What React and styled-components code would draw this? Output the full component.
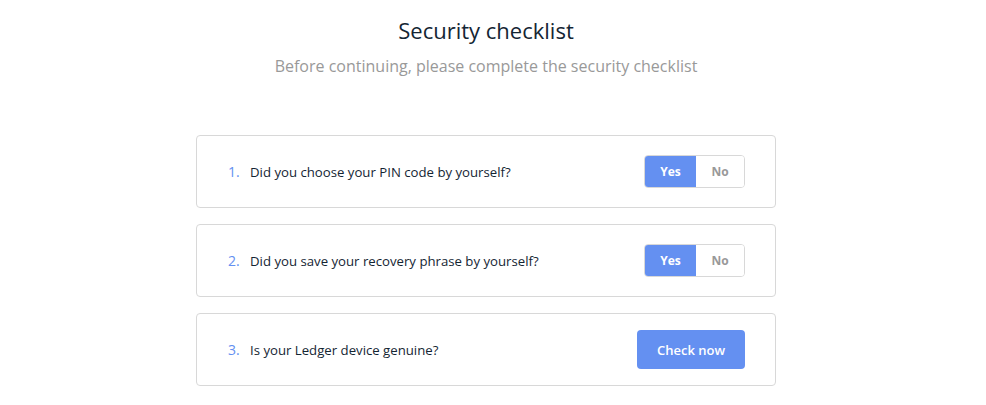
import React, { useState } from 'react'
import styled, { createGlobalStyle } from 'styled-components'

const Global = createGlobalStyle`
  body {
    margin: 0;
    background: #fff;
    font-family: "Open Sans", "DejaVu Sans", sans-serif;
  }
`

const Page = styled.div`
  width: 580px;
  margin-left: 196px;
  padding-top: 14px;
  display: flex;
  flex-direction: column;
  align-items: center;
`

const Title = styled.h1`
  margin: 0;
  font-size: 22px;
  font-weight: 400;
  color: #142533;
  line-height: 32px;
`

const Subtitle = styled.p`
  margin: 10px 0 0;
  font-size: 16px;
  color: #999;
  line-height: 20px;
`

const List = styled.div`
  margin-top: 59px;
  width: 100%;
  display: flex;
  flex-direction: column;
  gap: 16px;
`

const Card = styled.div`
  height: 73px;
  box-sizing: border-box;
  border: 1px solid #d8d8d8;
  border-radius: 4px;
  padding: 0 30px 0 31px;
  display: flex;
  align-items: center;
`

const Num = styled.span`
  color: #6490f1;
  font-size: 14px;
  width: 22px;
`

const Question = styled.span`
  flex: 1;
  font-size: 13.2px;
  color: #142533;
`

const Toggle = styled.div`
  display: flex;
  border: 1px solid #d8d8d8;
  border-radius: 4px;
  overflow: hidden;
  height: 33px;
  box-sizing: border-box;
`

const Opt = styled.button`
  border: none;
  font-family: inherit;
  font-size: 12px;
  font-weight: 700;
  width: ${p => p.$w}px;
  background: ${p => (p.$on ? '#6490f1' : '#fff')};
  color: ${p => (p.$on ? '#fff' : '#999')};
  cursor: pointer;
  padding: 0;
`

const Check = styled.button`
  border: none;
  border-radius: 4px;
  background: #6490f1;
  color: #fff;
  font-family: inherit;
  font-size: 13px;
  font-weight: 600;
  width: 108px;
  height: 39px;
  padding: 0;
  cursor: pointer;
`

function YesNo() {
  const [v, setV] = useState(true)
  return (
    <Toggle>
      <Opt $w={51} $on={v} onClick={() => setV(true)}>Yes</Opt>
      <Opt $w={48} $on={!v} onClick={() => setV(false)}>No</Opt>
    </Toggle>
  )
}

export default function App() {
  return (
    <>
      <Global />
      <Page>
        <Title>Security checklist</Title>
        <Subtitle>Before continuing, please complete the security checklist</Subtitle>
        <List>
          <Card>
            <Num>1.</Num>
            <Question>Did you choose your PIN code by yourself?</Question>
            <YesNo />
          </Card>
          <Card>
            <Num>2.</Num>
            <Question>Did you save your recovery phrase by yourself?</Question>
            <YesNo />
          </Card>
          <Card>
            <Num>3.</Num>
            <Question>Is your Ledger device genuine?</Question>
            <Check>Check now</Check>
          </Card>
        </List>
      </Page>
    </>
  )
}
